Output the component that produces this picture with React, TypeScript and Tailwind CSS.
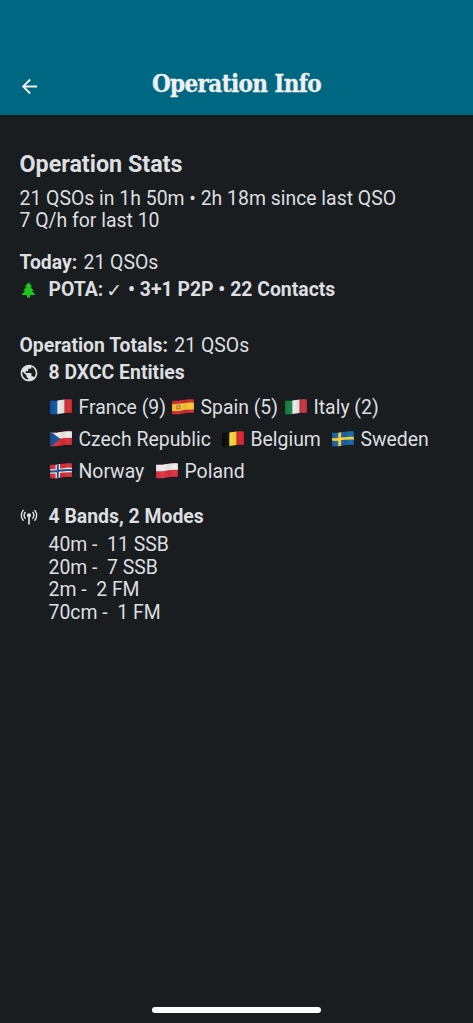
import { ReactNode } from 'react';
import { MdArrowBack, MdPublic } from 'react-icons/md';

interface FlagProps {
  code: string;
}

interface EntityItem {
  code: string;
  label: string;
  className: string;
}

const entityRows: EntityItem[][] = [
  [
    { code: 'fr', label: 'France (9)', className: 'w-[122px]' },
    { code: 'es', label: 'Spain (5)', className: 'w-[113px]' },
    { code: 'it', label: 'Italy (2)', className: 'w-[110px]' },
  ],
  [
    { code: 'cz', label: 'Czech Republic', className: 'w-[172px]' },
    { code: 'be', label: 'Belgium', className: 'w-[110px]' },
    { code: 'se', label: 'Sweden', className: 'w-[110px]' },
  ],
  [
    { code: 'no', label: 'Norway', className: 'w-[106px]' },
    { code: 'pl', label: 'Poland', className: 'w-[110px]' },
  ],
];

const bands = [
  { name: '40m', modes: '11 SSB' },
  { name: '20m', modes: '7 SSB' },
  { name: '2m', modes: '2 FM' },
  { name: '70cm', modes: '1 FM' },
];

const stripes: Record<string, string[]> = {
  fr: ['#0b53a5', '#eeeeee', '#d8282f'],
  it: ['#12813f', '#eeeeee', '#c8303a'],
  be: ['#080808', '#fbdc35', '#dd1f2b'],
};

// Stripe drawn along the same wave as the cloth
function wave(y: number, h: number) {
  return `M0 ${y + 1.2}C5 ${y + 1.6} 7 ${y + 1} 11 ${y + 0.4}S18 ${y - 0.4} 22 ${y}V${y + h}C18 ${y + h - 0.4} 15 ${y + h - 0.2} 11 ${y + h + 0.4}S5 ${y + h + 1.6} 0 ${y + h + 1.2}Z`;
}

function Flag({ code }: FlagProps) {
  const clipId = `flag-${code}`;
  const colors = stripes[code];

  return (
    <svg width="22" height="16" viewBox="0 0 22 16" className="mb-[2px] shrink-0">
      <defs>
        <clipPath id={clipId}>
          <path d={wave(0.5, 13.5)} />
        </clipPath>
        <linearGradient id={`${clipId}-shade`}>
          <stop offset="0" stopColor="#000" stopOpacity="0.08" />
          <stop offset="0.3" stopColor="#fff" stopOpacity="0.05" />
          <stop offset="0.6" stopColor="#000" stopOpacity="0.08" />
          <stop offset="0.85" stopColor="#fff" stopOpacity="0.05" />
          <stop offset="1" stopColor="#000" stopOpacity="0.08" />
        </linearGradient>
      </defs>
      <g clipPath={`url(#${clipId})`}>
        {colors && colors.map((color, i) => (
          <rect key={i} x={i * 7.33} width="7.4" height="16" fill={color} />
        ))}
        {code === 'es' && (
          <>
            <rect width="22" height="16" fill="#ce2a2f" />
            <path d={wave(3.8, 7)} fill="#fbc72d" />
            <rect x="4.2" y="6" width="4.3" height="4.5" rx="1" fill="#bd6b35" />
            <rect x="5.4" y="7" width="1.8" height="2.2" fill="#d9b27c" />
          </>
        )}
        {code === 'cz' && (
          <>
            <rect width="22" height="16" fill="#d62c33" />
            <path d={wave(-1, 8)} fill="#eeeeee" />
            <path d="M0 0L10.5 8L0 16Z" fill="#174f92" />
          </>
        )}
        {code === 'se' && (
          <>
            <rect width="22" height="16" fill="#1763ab" />
            <path d={wave(5.9, 2.7)} fill="#fccf2c" />
            <rect x="6.3" width="2.8" height="16" fill="#fccf2c" />
          </>
        )}
        {code === 'no' && (
          <>
            <rect width="22" height="16" fill="#d83138" />
            <path d={wave(5, 4.4)} fill="#eeeeee" />
            <rect x="5.6" width="4.4" height="16" fill="#eeeeee" />
            <path d={wave(6.2, 2)} fill="#174a8c" />
            <rect x="6.8" width="2" height="16" fill="#174a8c" />
          </>
        )}
        {code === 'pl' && (
          <>
            <rect width="22" height="16" fill="#db303d" />
            <path d={wave(-1, 8)} fill="#eeeeee" />
          </>
        )}
        <rect width="22" height="16" fill={`url(#${clipId}-shade)`} />
      </g>
    </svg>
  );
}

function PineTreeIcon() {
  return (
    <svg width="19" height="20" viewBox="0 0 24 24" preserveAspectRatio="none" fill="#1ec81e">
      <path d="M10,21V18H3L8,13H5L10,8H7L12,3L17,8H14L19,13H16L21,18H14V21H10Z" />
    </svg>
  );
}

function AntennaIcon() {
  return (
    <svg width="20" height="20" viewBox="0 0 24 24" fill="currentColor">
      <path d="M12 7.5C12.69 7.5 13.27 7.73 13.76 8.2S14.5 9.27 14.5 10C14.5 11.05 14 11.81 13 12.28V21H11V12.28C10 11.81 9.5 11.05 9.5 10C9.5 9.27 9.76 8.67 10.24 8.2S11.31 7.5 12 7.5M16.69 5.3C17.94 6.55 18.61 8.11 18.7 10C18.7 11.8 18.03 13.38 16.69 14.72L15.5 13.5C16.5 12.59 17 11.42 17 10C17 8.67 16.5 7.5 15.5 6.5L16.69 5.3M6.09 4.08C4.5 5.67 3.7 7.64 3.7 10S4.5 14.3 6.09 15.89L4.92 17.11C3 15.08 2 12.7 2 10C2 7.3 3 4.94 4.92 2.91L6.09 4.08M19.08 2.91C21 4.94 22 7.3 22 10C22 12.8 21 15.17 19.08 17.11L17.91 15.89C19.5 14.3 20.3 12.33 20.3 10S19.5 5.67 17.91 4.08L19.08 2.91M7.31 5.3L8.5 6.5C7.5 7.42 7 8.58 7 10C7 11.33 7.5 12.5 8.5 13.5L7.31 14.72C5.97 13.38 5.3 11.8 5.3 10C5.3 8.2 5.97 6.64 7.31 5.3Z" />
    </svg>
  );
}

function IconRow({ icon, children }: { icon: ReactNode; children: ReactNode }) {
  return (
    <div className="flex h-7 items-center font-bold">
      <span className="-ml-px flex w-[30px] shrink-0 items-center pb-px">{icon}</span>
      <span className="flex items-center whitespace-pre">{children}</span>
    </div>
  );
}

export default function App() {
  return (
    <div className="flex h-[1023px] w-[473px] flex-col overflow-hidden bg-[#191d1f] font-['Roboto',sans-serif] text-[19.4px] leading-[22px] text-[#dedfe0]">
      {/* Header */}
      <header className="flex h-[115px] shrink-0 items-end bg-[#006783] pb-[9px] text-[#f0f0f0]">
        <div className="flex h-10 w-[76px] items-center pl-[18px]">
          <MdArrowBack size={23} />
        </div>
        <h1 className="flex h-11 flex-1 items-center justify-center whitespace-nowrap font-['Roboto_Slab','DejaVu_Serif',serif] text-[24px] font-bold tracking-[-0.65px] [-webkit-text-stroke:0.3px_#f0f0f0] [font-stretch:condensed]">
          Operation Info
        </h1>
        <div className="w-[76px]" />
      </header>

      <main className="flex flex-1 flex-col px-[19.5px] pt-[34px]">
        <h2 className="h-[30px] text-[23.3px] font-bold leading-[30px]">Operation Stats</h2>
        <div className="mt-[9px] whitespace-nowrap">
          <p>21 QSOs in 1h 50m • 2h 18m since last QSO</p>
          <p>7 Q/h for last 10</p>
        </div>

        {/* Today */}
        <section className="mt-[18px]">
          <p className="h-[26px] leading-[26px]"><b className="mr-[1.5px]">Today:</b> 21 QSOs</p>
          <IconRow icon={<PineTreeIcon />}>
            POTA:<span className="ml-[3px] mr-px font-['DejaVu_Sans',sans-serif] text-[19px] font-normal">✓</span> • 3+1 P2P • 22 Contacts
          </IconRow>
        </section>

        {/* Totals */}
        <section className="mt-[29px]">
          <p className="h-[26px] leading-[26px]"><b className="mr-[1.5px]">Operation Totals:</b> 21 QSOs</p>
          <IconRow icon={<MdPublic size={20} />}>8 DXCC Entities</IconRow>
          <div className="mt-[5px] pl-[30.5px]">
            {entityRows.map((row, i) => (
              <div key={i} className="flex h-8 items-center">
                {row.map((entity) => (
                  <div key={entity.code} className={`flex shrink-0 items-center gap-[6.5px] whitespace-nowrap ${entity.className}`}>
                    <Flag code={entity.code} />
                    <span>{entity.label}</span>
                  </div>
                ))}
              </div>
            ))}
          </div>
        </section>

        {/* Bands */}
        <section className="mt-[15px]">
          <IconRow icon={<AntennaIcon />}>4 Bands, 2 Modes</IconRow>
          <div className="mt-[3px] pl-[29px] leading-[22.7px]">
            {bands.map((band) => (
              <p key={band.name} className="whitespace-pre">{`${band.name} -  ${band.modes}`}</p>
            ))}
          </div>
        </section>
      </main>

      {/* Home indicator */}
      <footer className="flex h-4 shrink-0 justify-center">
        <div className="h-[6px] w-[169px] rounded-full bg-white" />
      </footer>
    </div>
  );
}
